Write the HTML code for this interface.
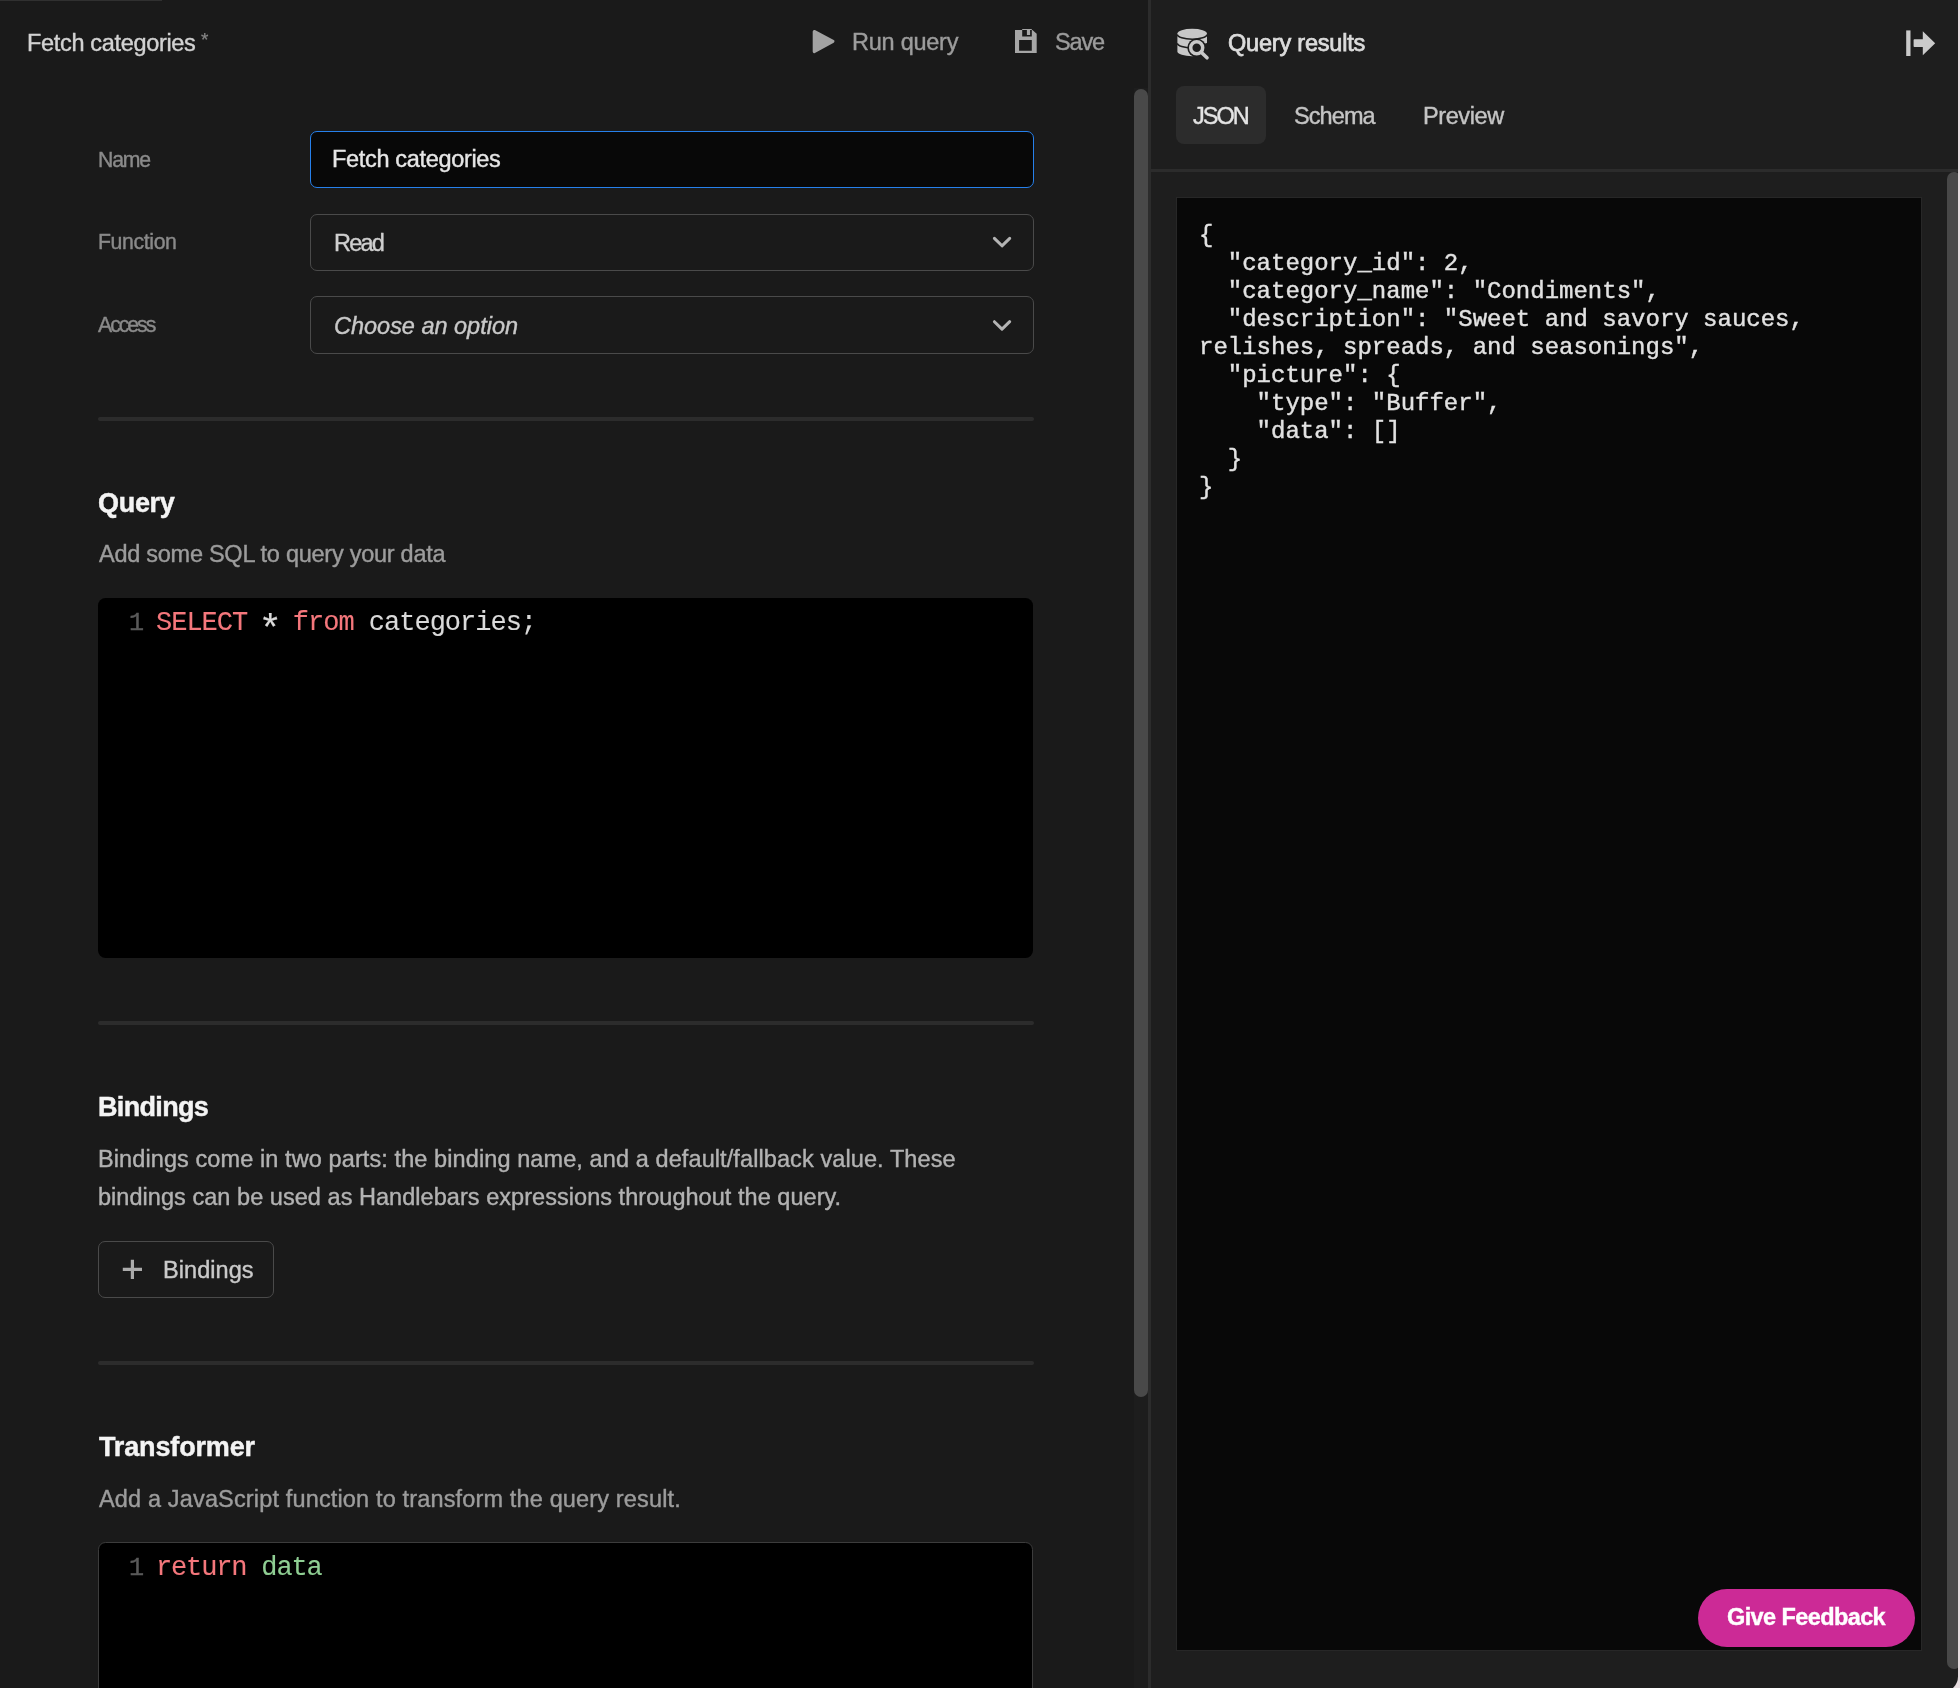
<!DOCTYPE html>
<html lang="en"><head><meta charset="utf-8"><title>Fetch categories</title>
<style>
html,body{margin:0;padding:0;}
body{width:1960px;height:1688px;overflow:hidden;position:relative;background:#e7dde0;font-family:"Liberation Sans",sans-serif;}
.b{position:absolute;box-sizing:border-box;}
.t{position:absolute;white-space:pre;will-change:transform;-webkit-text-stroke-width:0.4px;}
svg{position:absolute;overflow:visible;}
pre{margin:0;}
</style></head><body>
<div class="b" style="left:0px;top:0px;width:1148px;height:1688px;background:#1a1a1a;"></div>
<div class="b" style="left:1134px;top:88px;width:14px;height:1600px;background:#1d1d1d;"></div>
<div class="b" style="left:1148px;top:0px;width:3px;height:1688px;background:#2c2c2c;"></div>
<div class="b" style="left:1151px;top:0px;width:807px;height:1691.5px;background:#1e1e1e;border-bottom-right-radius:15.5px;"></div>
<div class="b" style="left:0px;top:0px;width:162px;height:1px;background:#303030;"></div>
<div class="b" style="left:1134px;top:89px;width:14px;height:1308px;background:#494949;border-radius:7px;"></div>
<div class="b" style="left:1151px;top:169px;width:807px;height:3px;background:#2c2c2c;"></div>
<div class="b" style="left:1947px;top:172px;width:11px;height:1497px;overflow:hidden;"><div class="b" style="left:0;top:0;width:14px;height:1497px;background:#484848;border-radius:7px;"></div></div>
<div class="t" style="left:27.20px;top:32.00px;font:normal normal 23.5px/1 'Liberation Sans', sans-serif;color:#d2d2d2;letter-spacing:-0.328px;">Fetch categories</div>
<div class="t" style="left:201.40px;top:30.00px;font:normal normal 19px/1 'Liberation Sans', sans-serif;color:#868686;letter-spacing:0.000px;-webkit-text-stroke-width:0.2px;">*</div>
<div class="t" style="left:852.20px;top:31.00px;font:normal normal 23.5px/1 'Liberation Sans', sans-serif;color:#9c9c9c;letter-spacing:-0.249px;">Run query</div>
<div class="t" style="left:1055.20px;top:31.00px;font:normal normal 23.5px/1 'Liberation Sans', sans-serif;color:#9c9c9c;letter-spacing:-1.133px;">Save</div>
<svg style="left:0;top:0" width="1960" height="70"><path d="M814.2 31.4 L833.0 41.4 L814.2 51.6 Z" fill="#a3a3a3" stroke="#a3a3a3" stroke-width="3" stroke-linejoin="round"/><path fill-rule="evenodd" fill="#a6a6a6" d="M1015 30 H1032.4 L1036.7 33.8 V52.9 H1015 Z M1022.2 29 H1031.8 V36.6 H1022.2 Z M1019.1 40 H1031.8 V50.7 H1019.1 Z"/><rect x="1026.9" y="30" width="3.2" height="5" fill="#a6a6a6"/></svg>
<div class="t" style="left:1228.00px;top:32.00px;font:normal normal 23.5px/1 'Liberation Sans', sans-serif;color:#dcdcdc;letter-spacing:-0.200px;-webkit-text-stroke:0.75px #dcdcdc;">Query results</div>
<svg style="left:0;top:0" width="1960" height="70">
<g fill="#c8c8c8">
<path d="M1177.4 33.5 a14.8 4.7 0 0 1 29.6 0 V51.5 a14.8 4.7 0 0 1 -29.6 0 Z"/>
</g>
<g fill="none" stroke="#1e1e1e" stroke-width="1.6">
<path d="M1177.4 34.5 a14.8 4.7 0 0 0 29.6 0"/>
<path d="M1177.4 43.2 a14.8 4.7 0 0 0 29.6 0"/>
</g>
<circle cx="1196.7" cy="47.8" r="9.4" fill="#1e1e1e"/>
<rect x="1197" y="43.4" width="14" height="18" fill="#1e1e1e"/>
<path d="M1201 52.2 L1207.6 58.4" stroke="#1e1e1e" stroke-width="6.4" stroke-linecap="butt"/>
<circle cx="1196.7" cy="47.8" r="6" fill="#1e1e1e" stroke="#c8c8c8" stroke-width="3.5"/>
<path d="M1201.2 52.3 L1207 57.8" stroke="#c8c8c8" stroke-width="3.6" stroke-linecap="round"/>
</svg>
<svg style="left:0;top:0" width="1960" height="70"><g fill="#cacaca"><rect x="1906.2" y="30.4" width="4.3" height="25.6"/><path d="M1914.4 39.3 H1922.8 V31.2 L1935.2 43.2 L1922.8 55.3 V47 H1914.4 Q1913.6 47 1913.6 46.2 V40.1 Q1913.6 39.3 1914.4 39.3 Z"/></g></svg>
<div class="b" style="left:1176px;top:86px;width:90px;height:58px;background:#2c2c2c;border-radius:8px;"></div>
<div class="t" style="left:1192.80px;top:105.00px;font:normal normal 23.5px/1 'Liberation Sans', sans-serif;color:#e4e4e4;letter-spacing:-2.000px;">JSON</div>
<div class="t" style="left:1294.30px;top:105.00px;font:normal normal 23.5px/1 'Liberation Sans', sans-serif;color:#c4c4c4;letter-spacing:-0.920px;">Schema</div>
<div class="t" style="left:1423.10px;top:105.00px;font:normal normal 23.5px/1 'Liberation Sans', sans-serif;color:#c4c4c4;letter-spacing:-0.400px;">Preview</div>
<div class="t" style="left:98.10px;top:150.00px;font:normal normal 21.25px/1 'Liberation Sans', sans-serif;color:#8a8a8a;letter-spacing:-1.200px;">Name</div>
<div class="t" style="left:98.10px;top:232.00px;font:normal normal 21.25px/1 'Liberation Sans', sans-serif;color:#8a8a8a;letter-spacing:-0.371px;">Function</div>
<div class="t" style="left:98.20px;top:315.00px;font:normal normal 21.25px/1 'Liberation Sans', sans-serif;color:#8a8a8a;letter-spacing:-2.040px;">Access</div>
<div class="b" style="left:310px;top:131px;width:724px;height:57px;background:#080808;border:1px solid #2680eb;border-radius:7px;"></div>
<div class="b" style="left:310px;top:214px;width:724px;height:57px;border:1px solid #4a4a4a;border-radius:7px;"></div>
<div class="b" style="left:310px;top:296px;width:724px;height:58px;border:1px solid #4a4a4a;border-radius:7px;"></div>
<div class="b" style="left:98px;top:1241px;width:176px;height:57px;border:1px solid #4a4a4a;border-radius:7px;"></div>
<div class="t" style="left:332.40px;top:148.00px;font:normal normal 23.5px/1 'Liberation Sans', sans-serif;color:#e6e6e6;letter-spacing:-0.326px;">Fetch categories</div>
<div class="t" style="left:333.80px;top:232.00px;font:normal normal 23.5px/1 'Liberation Sans', sans-serif;color:#cfcfcf;letter-spacing:-1.799px;">Read</div>
<div class="t" style="left:334.20px;top:315.00px;font:italic normal 23.5px/1 'Liberation Sans', sans-serif;color:#c8c8c8;letter-spacing:-0.013px;">Choose an option</div>
<svg style="left:0;top:0" width="1960" height="400"><g fill="none" stroke="#b4b4b4" stroke-width="3" stroke-linecap="round" stroke-linejoin="round"><path d="M994.4 238.4 L1002 245.8 L1009.7 238.4"/><path d="M994.4 321.7 L1002 329.1 L1009.7 321.7"/></g></svg>
<div class="b" style="left:98px;top:417px;width:936px;height:4px;background:#2c2c2c;border-radius:2px;"></div>
<div class="b" style="left:98px;top:1021px;width:936px;height:4px;background:#2c2c2c;border-radius:2px;"></div>
<div class="b" style="left:98px;top:1361px;width:936px;height:4px;background:#2c2c2c;border-radius:2px;"></div>
<div class="t" style="left:97.70px;top:490.00px;font:normal bold 27px/1 'Liberation Sans', sans-serif;color:#f4f4f4;letter-spacing:-0.300px;-webkit-text-stroke:0.45px #f4f4f4;">Query</div>
<div class="t" style="left:98.70px;top:543.00px;font:normal normal 23.5px/1 'Liberation Sans', sans-serif;color:#9c9c9c;letter-spacing:-0.264px;">Add some SQL to query your data</div>
<div class="b" style="left:98px;top:598px;width:935.4px;height:360px;background:#000;border-radius:7.5px;"></div>
<div class="t" style="left:129.00px;top:611.00px;font:normal normal 25.2px/1 'Liberation Mono', monospace;color:#5a5a5a;letter-spacing:0.000px;">1</div>
<div class="t" style="left:155.90px;top:610.00px;font:normal normal 27px/1 'Liberation Mono', monospace;color:#dadada;letter-spacing:-1.000px;-webkit-text-stroke-width:0.12px;"><span style="color:#f4777c">SELECT</span> <span style="display:inline-block;transform:translateY(8px) scale(1.45)">*</span> <span style="color:#f4777c">from</span> categories;</div>
<div class="t" style="left:97.70px;top:1094.00px;font:normal bold 27px/1 'Liberation Sans', sans-serif;color:#f4f4f4;letter-spacing:-0.671px;-webkit-text-stroke:0.45px #f4f4f4;">Bindings</div>
<div class="t" style="left:98.10px;top:1148.00px;font:normal normal 23.5px/1 'Liberation Sans', sans-serif;color:#b2b2b2;letter-spacing:0.095px;">Bindings come in two parts: the binding name, and a default/fallback value. These</div>
<div class="t" style="left:97.70px;top:1186.00px;font:normal normal 23.5px/1 'Liberation Sans', sans-serif;color:#b2b2b2;letter-spacing:0.042px;">bindings can be used as Handlebars expressions throughout the query.</div>
<svg style="left:0;top:1200px" width="400" height="120"><g stroke="#ababab" stroke-width="3.2" stroke-linecap="butt"><path d="M122.8 69.4 H142 M132.4 59.7 V79"/></g></svg>
<div class="t" style="left:163.10px;top:1259.00px;font:normal normal 23.5px/1 'Liberation Sans', sans-serif;color:#cacaca;letter-spacing:0.058px;">Bindings</div>
<div class="t" style="left:98.70px;top:1434.00px;font:normal bold 27px/1 'Liberation Sans', sans-serif;color:#f4f4f4;letter-spacing:-0.145px;-webkit-text-stroke:0.45px #f4f4f4;">Transformer</div>
<div class="t" style="left:98.70px;top:1488.00px;font:normal normal 23.5px/1 'Liberation Sans', sans-serif;color:#9c9c9c;letter-spacing:0.152px;">Add a JavaScript function to transform the query result.</div>
<div class="b" style="left:98px;top:1542px;width:935.4px;height:200px;background:#000;border:1px solid #3c3c3c;border-radius:7.5px;"></div>
<div class="t" style="left:129.00px;top:1556.00px;font:normal normal 25.2px/1 'Liberation Mono', monospace;color:#5a5a5a;letter-spacing:0.000px;">1</div>
<div class="t" style="left:156.00px;top:1555.00px;font:normal normal 27px/1 'Liberation Mono', monospace;color:#dadada;letter-spacing:-1.155px;-webkit-text-stroke-width:0.12px;"><span style="color:#f4777c">return</span> <span style="color:#8fce93">data</span></div>
<div class="b" style="left:1176px;top:197px;width:746px;height:1454px;background:#080808;border:1px solid #272727;"></div>
<pre class="t" style="left:1199px;top:222px;font:normal 24px/28px 'Liberation Mono', monospace;color:#e2e2e2;-webkit-text-stroke:0.4px #e2e2e2;">{
  "category_id": 2,
  "category_name": "Condiments",
  "description": "Sweet and savory sauces,
relishes, spreads, and seasonings",
  "picture": {
    "type": "Buffer",
    "data": []
  }
}</pre>
<div class="b" style="left:1698px;top:1589px;width:217px;height:58px;background:#cc2a96;border-radius:29px;"></div>
<div class="t" style="left:1727.20px;top:1606.00px;font:normal bold 23.5px/1 'Liberation Sans', sans-serif;color:#ffffff;letter-spacing:-0.601px;">Give Feedback</div>
</body></html>
